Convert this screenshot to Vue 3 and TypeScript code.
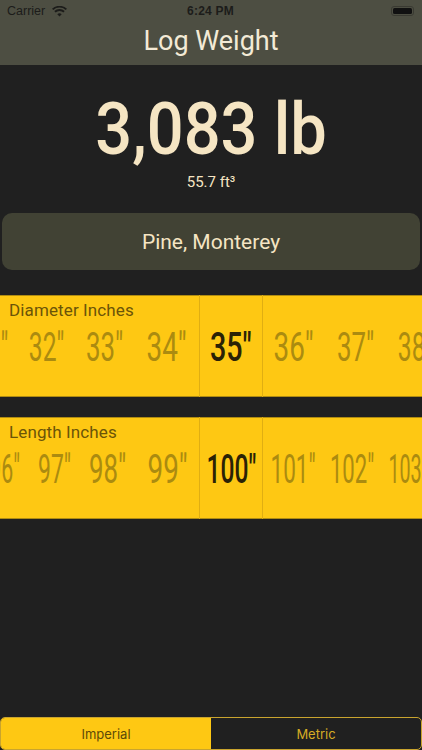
<script setup lang="ts">
interface Cell { t: string; w: number; s: number }
interface Wheel { label: string; left: Cell[]; mid: string; midScale: number; right: Cell[] }

const wheels: Wheel[] = [
  {
    label: 'Diameter Inches',
    left: [
      { t: '31"', w: 56, s: 0.6 },
      { t: '32"', w: 56, s: 0.6 },
      { t: '33"', w: 60, s: 0.63 },
      { t: '34"', w: 64, s: 0.68 },
    ],
    mid: '35"',
    midScale: 0.7,
    right: [
      { t: '36"', w: 62, s: 0.68 },
      { t: '37"', w: 62, s: 0.63 },
      { t: '38"', w: 58, s: 0.6 },
    ],
  },
  {
    label: 'Length Inches',
    left: [
      { t: '96"', w: 50, s: 0.52 },
      { t: '97"', w: 50, s: 0.56 },
      { t: '98"', w: 56, s: 0.63 },
      { t: '99"', w: 63, s: 0.68 },
    ],
    mid: '100"',
    midScale: 0.6,
    right: [
      { t: '101"', w: 60, s: 0.55 },
      { t: '102"', w: 58, s: 0.54 },
      { t: '103"', w: 54, s: 0.48 },
    ],
  },
]
</script>

<template>
  <div class="screen">
    <header class="nav">
      <div class="status">
        <div class="status-left">
          <span>Carrier</span>
          <svg width="15" height="11" viewBox="0 0 15 11" aria-hidden="true">
            <path d="M7.5 10.6 5.3 8.2a3.2 3.2 0 0 1 4.4 0Z" fill="#1c1c1a" />
            <path d="M3.6 6.5 2.3 5.1a7.6 7.6 0 0 1 10.4 0L11.4 6.5a5.7 5.7 0 0 0-7.8 0Z" fill="#1c1c1a" />
            <path d="M1.3 4.1 0 2.8a10.9 10.9 0 0 1 15 0l-1.3 1.3a9 9 0 0 0-12.4 0Z" fill="#1c1c1a" />
          </svg>
        </div>
        <span class="time">6:24 PM</span>
        <div class="battery"><i></i></div>
      </div>
      <h1 class="title">Log Weight</h1>
    </header>

    <section class="hero">
      <div class="weight">3,083 lb</div>
      <div class="volume">55.7 ft³</div>
    </section>

    <div class="species">Pine, Monterey</div>

    <section v-for="w in wheels" :key="w.label" class="wheel">
      <div class="wheel-label">{{ w.label }}</div>
      <div class="pane pane-left">
        <span v-for="c in w.left" :key="c.t" class="cell" :style="{ width: c.w + 'px' }">
          <b class="num" :style="{ transform: `scaleX(${c.s})` }">{{ c.t }}</b>
        </span>
      </div>
      <div class="pane-mid">
        <b class="num num-on" :style="{ transform: `scaleX(${w.midScale})` }">{{ w.mid }}</b>
      </div>
      <div class="pane pane-right">
        <span v-for="c in w.right" :key="c.t" class="cell" :style="{ width: c.w + 'px' }">
          <b class="num" :style="{ transform: `scaleX(${c.s})` }">{{ c.t }}</b>
        </span>
      </div>
    </section>

    <div class="segment">
      <div class="seg seg-on">Imperial</div>
      <div class="seg">Metric</div>
    </div>
  </div>
</template>

<style scoped>
.screen {
  height: 750px;
  width: 422px;
  overflow: hidden;
  display: flex;
  flex-direction: column;
  background: #202020;
  font-family: Roboto, "Noto Sans", sans-serif;
}
.nav {
  height: 65px;
  flex: none;
  background: #4d4e42;
  display: flex;
  flex-direction: column;
}
.status {
  height: 20px;
  flex: none;
  padding: 1px 8px 0 7px;
  display: grid;
  grid-template-columns: 1fr auto 1fr;
  align-items: center;
  font-family: "Liberation Sans", sans-serif;
  font-size: 12.5px;
  color: #1c1c1a;
}
.status-left {
  display: flex;
  align-items: center;
  gap: 7px;
}
.time {
  font-weight: 700;
  font-size: 12px;
  letter-spacing: 0.2px;
}
.battery {
  justify-self: end;
  width: 23px;
  height: 10px;
  border: 1px solid #3a3a32;
  border-radius: 3px;
  padding: 1px;
  box-sizing: border-box;
}
.battery i {
  display: block;
  height: 100%;
  border-radius: 1.5px;
  background: #111;
}
.title {
  margin: 0;
  padding-top: 1px;
  text-align: center;
  font-size: 27px;
  line-height: 38px;
  font-weight: 400;
  color: #f3ead6;
}
.hero {
  height: 148px;
  flex: none;
  text-align: center;
  color: #f5e5c3;
}
.weight {
  margin-top: 24px;
  font-size: 73px;
  line-height: 80px;
  font-weight: 500;
  transform: scaleX(0.89);
}
.volume {
  margin-top: 4px;
  font-size: 15px;
  line-height: 18px;
}
.species {
  flex: none;
  margin: 0 2px;
  height: 57px;
  border-radius: 10px;
  background: #414234;
  color: #f5e5c3;
  font-size: 21px;
  display: flex;
  align-items: center;
  justify-content: center;
}
.wheel {
  position: relative;
  flex: none;
  height: 102px;
  margin-top: 25px;
  display: grid;
  grid-template-columns: 199px 64px 1fr;
  background: #fec813;
  box-shadow: inset 0 1px 0 #b08c12, inset 0 -1px 0 #b08c12;
}
.wheel + .wheel {
  margin-top: 20px;
}
.wheel-label {
  position: absolute;
  left: 9px;
  top: 5px;
  font-size: 17px;
  line-height: 20px;
  letter-spacing: 0.12px;
  color: #6b5408;
}
.pane {
  display: flex;
  overflow: hidden;
  padding-top: 24px;
  height: 78px;
}
.pane-left {
  justify-content: flex-end;
}
.cell {
  flex: none;
  display: flex;
  justify-content: center;
  white-space: nowrap;
}
.pane-mid {
  padding-top: 24px;
  display: flex;
  justify-content: center;
  border-left: 1px solid #e0ae12;
  border-right: 1px solid #e0ae12;
}
.num {
  display: inline-block;
  font-size: 41px;
  line-height: 56px;
  font-weight: 400;
  color: #ab8b10;
  white-space: nowrap;
}
.num-on {
  font-weight: 500;
  color: #2a2206;
}
.segment {
  flex: none;
  margin-top: auto;
  height: 33px;
  display: grid;
  grid-template-columns: 1fr 1fr;
  border: 1px solid #c9a42e;
  border-radius: 5px;
  overflow: hidden;
  box-sizing: border-box;
}
.seg {
  display: flex;
  align-items: center;
  justify-content: center;
  font-size: 13px;
  color: #d6ac24;
  font-family: Inter, sans-serif;
}
.seg-on {
  background: #fec813;
  color: #5d4a08;
}
</style>
